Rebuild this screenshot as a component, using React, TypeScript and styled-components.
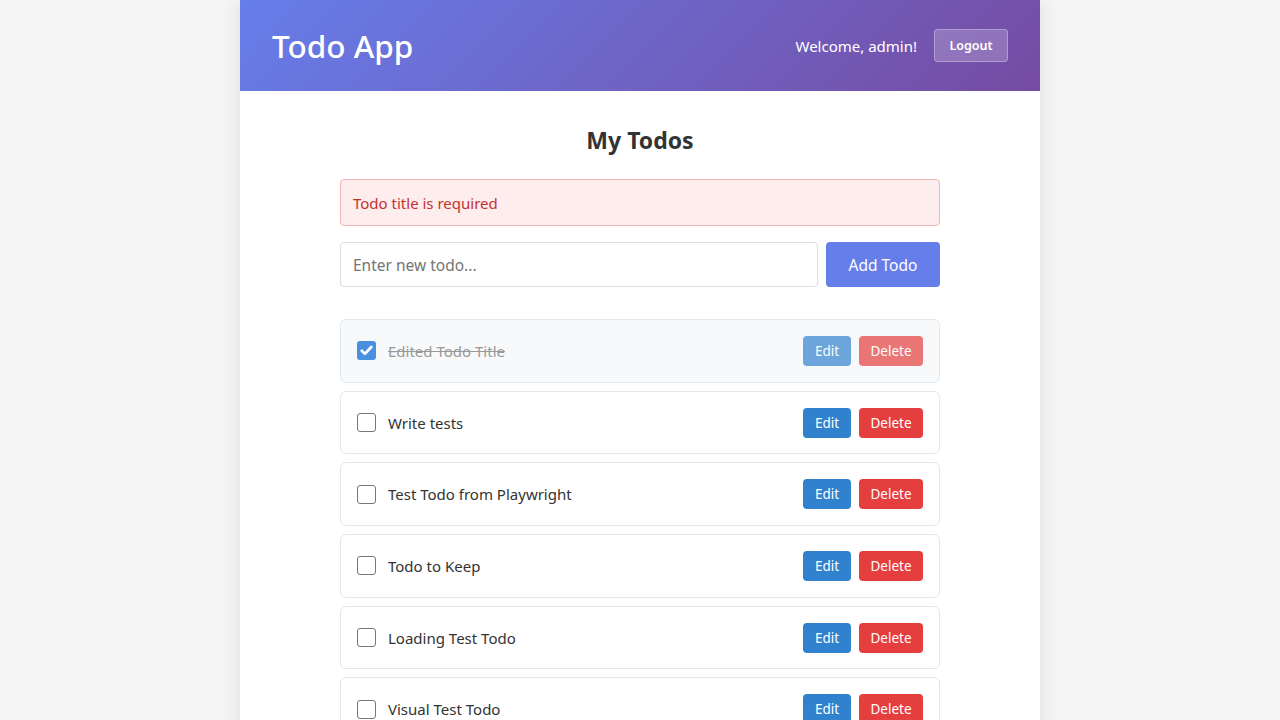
import React from "react";
import styled, { createGlobalStyle } from "styled-components";

const Global = createGlobalStyle`
  * { box-sizing: border-box; }
  body {
    margin: 0;
    background: #f5f5f5;
    font-family: "Noto Sans", "Open Sans", sans-serif;
    color: #333;
  }
`;

const Shell = styled.div`
  width: 800px;
  margin: 0 auto;
  min-height: 720px;
  background: #fff;
  box-shadow: 0 0 20px rgba(0, 0, 0, 0.1);
`;

const Header = styled.header`
  height: 91px;
  padding: 0 32px;
  display: flex;
  align-items: center;
  justify-content: space-between;
  background: linear-gradient(135deg, #667eea 0%, #764ba2 100%);
  color: #fff;
`;

const Brand = styled.h1`
  margin: 0;
  font-size: 31.5px;
  font-weight: 500;
`;

const UserBox = styled.div`
  display: flex;
  align-items: center;
  gap: 17px;
  font-size: 15px;
`;

const LogoutButton = styled.button`
  height: 33px;
  width: 74px;
  padding: 0;
  background: rgba(255, 255, 255, 0.2);
  border: 1px solid rgba(255, 255, 255, 0.3);
  border-radius: 4px;
  color: #fff;
  font-family: inherit;
  font-size: 12.5px;
  font-weight: 600;
`;

const Main = styled.main`
  width: 600px;
  margin: 0 auto;
  padding-top: 24px;
`;

const Title = styled.h2`
  margin: 0 0 14px;
  text-align: center;
  font-size: 23px;
  font-weight: 700;
  color: #333;
  line-height: 50px;
`;

const ErrorBox = styled.div`
  height: 47px;
  display: flex;
  align-items: center;
  padding: 0 12px;
  background: #fdeded;
  border: 1px solid #f5b5b5;
  border-radius: 4px;
  color: #c53030;
  font-size: 15px;
  margin-bottom: 16px;
`;

const Form = styled.form`
  display: flex;
  gap: 8px;
  margin-bottom: 32px;
`;

const Input = styled.input`
  flex: 1;
  height: 45px;
  padding: 0 12px;
  border: 1px solid #ddd;
  border-radius: 4px;
  font-family: inherit;
  font-size: 15.5px;
  color: #333;
  &::placeholder { color: #757575; }
`;

const AddButton = styled.button`
  width: 114px;
  height: 45px;
  border: none;
  border-radius: 4px;
  background: #667eea;
  color: #fff;
  font-family: inherit;
  font-size: 15.5px;
`;

const List = styled.ul`
  list-style: none;
  margin: 0;
  padding: 0;
  display: flex;
  flex-direction: column;
  gap: 8px;
`;

const Item = styled.li<{ $done?: boolean }>`
  height: 63.7px;
  flex: none;
  display: flex;
  align-items: center;
  gap: 12px;
  padding: 0 16px;
  border: 1px solid #e2e8f0;
  border-radius: 6px;
  background: ${(p) => (p.$done ? "#f8f9fa" : "#fff")};
`;

const Box = styled.span<{ $checked?: boolean }>`
  width: 19px;
  height: 19px;
  flex: none;
  border-radius: 3px;
  display: flex;
  align-items: center;
  justify-content: center;
  border: ${(p) => (p.$checked ? "none" : "1px solid #767676")};
  background: ${(p) => (p.$checked ? "#4a90e2" : "#fff")};
`;

const Text = styled.span<{ $done?: boolean }>`
  flex: 1;
  font-size: 15px;
  color: ${(p) => (p.$done ? "#999" : "#333")};
  text-decoration: ${(p) => (p.$done ? "line-through" : "none")};
`;

const Actions = styled.div<{ $dim?: boolean }>`
  display: flex;
  gap: 8px;
  opacity: ${(p) => (p.$dim ? 0.7 : 1)};
`;

const ActionButton = styled.button<{ $kind: "edit" | "delete" }>`
  height: 30px;
  width: ${(p) => (p.$kind === "edit" ? "48px" : "64px")};
  border: none;
  border-radius: 4px;
  background: ${(p) => (p.$kind === "edit" ? "#3182ce" : "#e53e3e")};
  color: #fff;
  font-family: inherit;
  font-size: 13.5px;
  padding: 0;
`;

const todos = [
  { title: "Edited Todo Title", done: true },
  { title: "Write tests", done: false },
  { title: "Test Todo from Playwright", done: false },
  { title: "Todo to Keep", done: false },
  { title: "Loading Test Todo", done: false },
  { title: "Visual Test Todo", done: false },
];

export default function App() {
  return (
    <>
      <Global />
      <Shell>
        <Header>
          <Brand>Todo App</Brand>
          <UserBox>
            <span>Welcome, admin!</span>
            <LogoutButton>Logout</LogoutButton>
          </UserBox>
        </Header>
        <Main>
          <Title>My Todos</Title>
          <ErrorBox>Todo title is required</ErrorBox>
          <Form onSubmit={(e) => e.preventDefault()}>
            <Input placeholder="Enter new todo..." />
            <AddButton type="submit">Add Todo</AddButton>
          </Form>
          <List>
            {todos.map((t) => (
              <Item key={t.title} $done={t.done}>
                <Box $checked={t.done}>
                  {t.done && (
                    <svg width="15" height="15" viewBox="0 0 12 12">
                      <path d="M2.2 6.2l2.5 2.5L9.8 3.2" fill="none" stroke="#fff" strokeWidth="2.2" strokeLinecap="round" strokeLinejoin="round" />
                    </svg>
                  )}
                </Box>
                <Text $done={t.done}>{t.title}</Text>
                <Actions $dim={t.done}>
                  <ActionButton $kind="edit">Edit</ActionButton>
                  <ActionButton $kind="delete">Delete</ActionButton>
                </Actions>
              </Item>
            ))}
          </List>
        </Main>
      </Shell>
    </>
  );
}
